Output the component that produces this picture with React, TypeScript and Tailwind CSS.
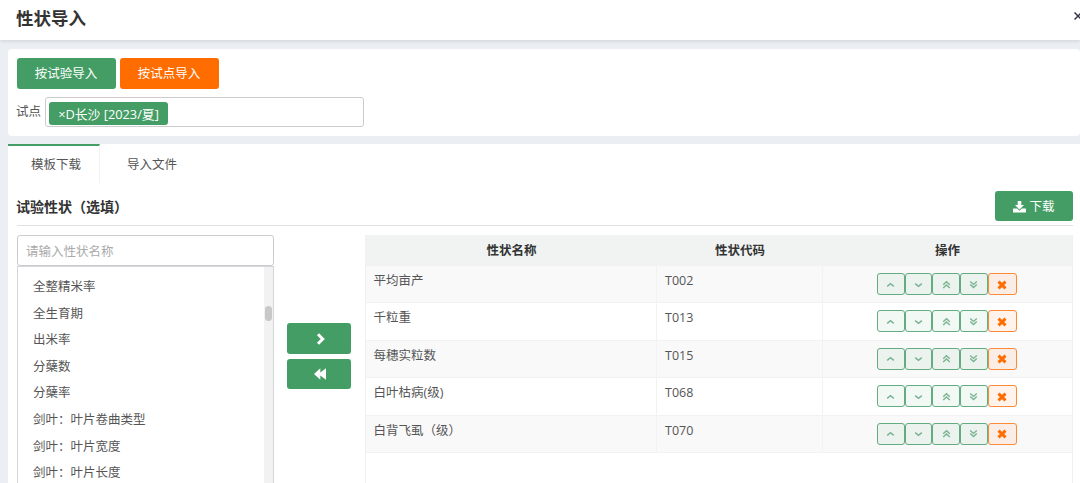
import type { ReactNode } from "react";

const traits = [
  "全整精米率",
  "全生育期",
  "出米率",
  "分蘖数",
  "分蘖率",
  "剑叶：叶片卷曲类型",
  "剑叶：叶片宽度",
  "剑叶：叶片长度",
];

const rows = [
  { name: "平均亩产", code: "T002" },
  { name: "千粒重", code: "T013" },
  { name: "每穗实粒数", code: "T015" },
  { name: "白叶枯病(级)", code: "T068" },
  { name: "白背飞虱（级）", code: "T070" },
];

const arrows = [
  { label: "上移", d: "M2.2 7.4 L5.5 4.6 L8.8 7.4" },
  { label: "下移", d: "M2.2 4.6 L5.5 7.4 L8.8 4.6" },
  { label: "置顶", d: "M2.2 5.8 L5.5 2.8 L8.8 5.8 M2.2 9 L5.5 6 L8.8 9" },
  { label: "置底", d: "M2.2 2.4 L5.5 5.4 L8.8 2.4 M2.2 5.6 L5.5 8.6 L8.8 5.6" },
];

function RowButton({ label, children }: { label: string; children: ReactNode }) {
  return (
    <button
      aria-label={label}
      className="flex h-[22px] w-[27.7px] items-center justify-center rounded-[3px] border border-[#62ac80] bg-[#449d65]/7 text-[#79b391]"
    >
      {children}
    </button>
  );
}

function Actions() {
  return (
    <div className="flex pt-[7px] pl-[54px]">
      {arrows.map((a) => (
        <RowButton key={a.label} label={a.label}>
          <svg width="11" height="11" viewBox="0 0 11 11" fill="none" stroke="currentColor" strokeWidth="1.4">
            <path d={a.d} />
          </svg>
        </RowButton>
      ))}
      <button
        aria-label="删除"
        className="flex h-[22px] w-[29px] items-center justify-center rounded-[3px] border border-[#ff8a35] bg-[#ff6c00]/8 pt-[1px] text-[#ff6c00]"
      >
        <svg width="10" height="10" viewBox="0 0 10 10" stroke="currentColor" strokeWidth="2.9">
          <path d="M1.5 1.6 L8.5 8.4 M8.5 1.6 L1.5 8.4" />
        </svg>
      </button>
    </div>
  );
}

export default function App() {
  return (
    <div className="h-[483px] w-[1080px] overflow-hidden bg-[#ebeff3] font-['Open_Sans','Noto_Sans_CJK_SC',sans-serif] text-[12.5px] leading-[18px] text-[#555]">
      {/* Dialog title */}
      <header className="flex h-[40px] items-center justify-between bg-white pb-[4px] pl-[16px] shadow-[0_1px_4px_rgba(0,0,0,0.12)]">
        <h1 className="text-[17.5px] leading-6 font-bold text-[#333]">性状导入</h1>
        <svg className="mt-[-4px] mr-[-2px]" width="8" height="8" viewBox="0 0 8 8" stroke="#33334a" strokeWidth="1.5">
          <path d="M0.5 0.5 L7.5 7.5 M7.5 0.5 L0.5 7.5" />
        </svg>
      </header>

      {/* Filters */}
      <section className="mt-[9px] ml-[8px] h-[87px] rounded-[4px] bg-white pt-[9px] pl-[9px]">
        <div className="flex gap-[4px] text-white">
          <button className="h-[31px] w-[99px] rounded-[3px] bg-[#449d65] pt-[1px] pr-[1px]">按试验导入</button>
          <button className="h-[31px] w-[99px] rounded-[3px] bg-[#ff6c00] pt-[1px] pr-[1px]">按试点导入</button>
        </div>
        <div className="mt-[8px] flex">
          <label className="ml-[-1px] w-[29px] pt-[6px]">试点</label>
          <div className="h-[30px] w-[319px] rounded-[3px] border border-[#ccc] pt-[4px] pl-[3px]">
            <span className="flex h-[23px] w-[119px] items-center justify-center rounded-[3px] bg-[#449d65] text-[12.8px] whitespace-nowrap text-white">
              ×D长沙 [2023/夏]
            </span>
          </div>
        </div>
      </section>

      <section className="mt-[8px] ml-[8px] h-[339px] bg-white">
        {/* Tabs */}
        <nav className="flex h-[39px]">
          <button className="w-[92px] border-t-2 border-r border-t-[#449d65] border-r-[#f2f2f2] pl-[5px]">模板下载</button>
          <button className="w-[105px] pt-[2px] pr-[1px]">导入文件</button>
        </nav>

        <div className="mr-[7px] ml-[9px]">
          <div className="flex h-[43px] items-start justify-between border-b border-[#e1e1e1] pt-[8px]">
            <h2 className="ml-[-1px] pt-[7px] text-[14px] font-bold text-[#333]">试验性状（选填）</h2>
            <button className="flex h-[30px] w-[78px] items-center justify-center gap-[3px] rounded-[3px] bg-[#449d65] pt-[1px] text-white">
              <svg width="13" height="12" viewBox="0 0 13 12" fill="currentColor">
                <path d="M4.7 0 H8.3 V4 H11 L6.5 8.5 L2 4 H4.7 Z" />
                <path d="M0.6 7.6 H4.2 L6.5 9.8 L8.8 7.6 H12.4 Q13 7.6 13 8.2 V10.9 Q13 11.5 12.4 11.5 H0.6 Q0 11.5 0 10.9 V8.2 Q0 7.6 0.6 7.6 Z" />
              </svg>
              下载
            </button>
          </div>

          <div className="flex pt-[9px]">
            {/* Available traits */}
            <div className="w-[257px]">
              <input
                className="block h-[31px] w-full rounded-[3px] border border-[#ccc] pt-[1px] pl-[8px] outline-none placeholder:text-[#aaa]"
                placeholder="请输入性状名称"
              />
              <div className="flex h-[240px] justify-between border border-[#d5d5dc]">
                <ul className="pt-[6px] pl-[15px]">
                  {traits.map((t) => (
                    <li key={t} className="h-[26.6px] leading-[27px]">
                      {t}
                    </li>
                  ))}
                </ul>
                <div className="w-[9px] bg-[#f2f2f2] pt-[39px]">
                  <div className="ml-[1px] h-[15px] w-[7px] rounded-full bg-[#c8c8c8]" />
                </div>
              </div>
            </div>

            {/* Transfer buttons */}
            <div className="mt-[88px] ml-[13px] flex w-[64px] flex-col gap-[5px] text-white">
              <button aria-label="添加" className="flex h-[31px] items-center justify-center rounded-[3px] bg-[#449d65] pt-[1px] pl-[3px]">
                <svg width="10" height="12" viewBox="0 0 10 12" fill="none" stroke="currentColor" strokeWidth="3">
                  <path d="M2 1.3 L6.7 6 L2 10.7" />
                </svg>
              </button>
              <button aria-label="全部移除" className="flex h-[30px] items-center justify-center rounded-[3px] bg-[#449d65] pl-[3px]">
                <svg width="13" height="12" viewBox="0 0 13 12" fill="currentColor">
                  <path d="M0 6 L6.3 0.3 V4.4 L12 0.3 V11.7 L6.3 7.6 V11.7 Z" />
                </svg>
              </button>
            </div>

            {/* Selected traits */}
            <div className="ml-[14px] h-[260px] w-[708px] border-x border-[#f1f1f1]">
              <div className="grid h-[31px] grid-cols-[291px_166px_1fr] items-center bg-[#f1f3f3] pt-[1px] text-center font-bold text-[#333]">
                <span>性状名称</span>
                <span>性状代码</span>
                <span>操作</span>
              </div>
              {rows.map((r) => (
                <div
                  key={r.code}
                  className="grid h-[37.4px] grid-cols-[291px_166px_1fr] border-b border-[#f2f2f2] odd:bg-white even:bg-[#f9f9f9]"
                >
                  <span className="border-r border-[#f2f2f2] pt-[6px] pl-[7.5px]">{r.name}</span>
                  <span className="border-r border-[#f2f2f2] pt-[6px] pl-[8px]">{r.code}</span>
                  <Actions />
                </div>
              ))}
            </div>
          </div>
        </div>
      </section>
    </div>
  );
}
